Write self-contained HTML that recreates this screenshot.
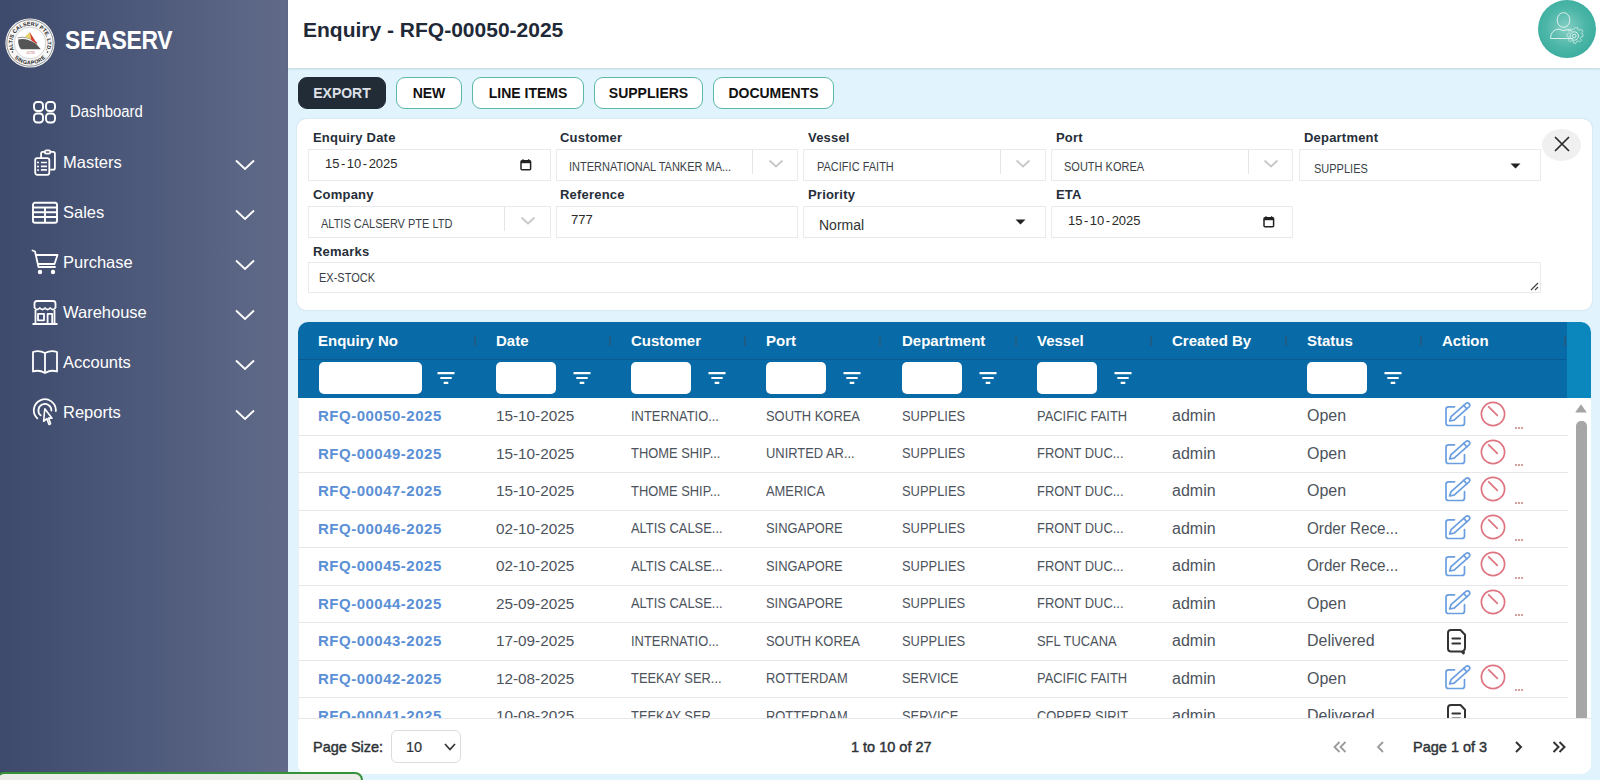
<!DOCTYPE html>
<html><head><meta charset="utf-8">
<style>
*{box-sizing:border-box;margin:0;padding:0}
html,body{width:1600px;height:780px;overflow:hidden;font-family:"Liberation Sans",sans-serif;background:#e1f3fc}
.abs{position:absolute}
#side{position:absolute;left:0;top:0;width:288px;height:780px;background:linear-gradient(90deg,#3d4a6b 0%,#4e5a7b 50%,#616a89 100%)}
#side .logo{position:absolute;left:6px;top:18px;width:49px;height:49px;border-radius:50%;background:#fff}
#side .brand{position:absolute;left:65px;top:26px;color:#fff;font-weight:bold;font-size:25.5px;letter-spacing:-0.3px;transform:scaleX(.9);transform-origin:0 0}
.nl{position:absolute;color:#fff;font-size:16.5px;line-height:18px}
.chev{left:234px}
.nav{position:absolute;left:0;width:288px;height:40px;color:#fff;font-size:16px}
.nav .ic{position:absolute;left:32px;top:8px;width:26px;height:26px}
.nav .lb{position:absolute;left:63px;top:10px}
.nav .chev{position:absolute;left:234px;top:14px;width:22px;height:12px}
#header{position:absolute;left:288px;top:0;width:1312px;height:68px;background:#fff;box-shadow:0 1px 2px rgba(40,70,90,.18)}
#title{position:absolute;left:303px;top:18px;font-size:21px;font-weight:bold;color:#1f2937}
.avatar{position:absolute;left:1538px;top:0;width:58px;height:58px;border-radius:50%;background:radial-gradient(circle at 48% 48%,#86cfc4 0%,#4db7a9 45%,#2aa394 100%)}
.btn{position:absolute;top:77px;height:32px;border:1px solid #5ab9a8;border-radius:9px;background:#fff;color:#111;font-weight:bold;font-size:14px;text-align:center;line-height:30px}
.btn.dark{background:#222c37;color:#dfe1e8;border-color:#222c37}
#form{position:absolute;left:297px;top:119px;width:1295px;height:191px;background:#fff;border-radius:9px;box-shadow:0 0 1.5px rgba(40,70,90,.22)}
.lbl{position:absolute;font-size:13px;font-weight:bold;color:#262e39;letter-spacing:.2px}
.inp{position:absolute;height:32px;border:1px solid #e8eaed;background:#fff;font-size:12px;color:#333}
.inp span{position:absolute;left:12px;top:10px}
#table{position:absolute;left:298px;top:322px;width:1293px;height:452px;background:#fff;border-radius:10px;overflow:hidden}
#thead{position:absolute;left:0;top:0;width:1269px;height:76px;background:#086aa6}
#thead2{position:absolute;left:1269px;top:0;width:24px;height:76px;background:#0b87bd}
.th{position:absolute;top:10px;color:#fff;font-weight:bold;font-size:15px}
.sep{position:absolute;top:14px;width:2px;height:10px;background:#1f5c88}
.fin{position:absolute;top:40px;height:32px;background:#fff;border-radius:5px}
.row{position:absolute;left:0;width:1270px;height:37.5px;border-bottom:1px solid #e5e7eb;font-size:15px;color:#4b5563}
.row div{position:absolute;top:10px;white-space:nowrap}
.row .id{color:#5b8fd6;font-weight:bold;font-size:15px;letter-spacing:0.5px;top:9px}
.row .dg{font-size:15.3px;color:#4d535c;top:9px}
.row .up{font-size:14.5px;transform:scaleX(.89);transform-origin:0 0;color:#4d535c;top:9.5px}
.row .lw{font-size:16px;color:#4d535c;top:9px}
#foot{position:absolute;left:0;top:396px;width:1293px;height:56px;background:#fff;border-top:1px solid #e5e7eb}
#toast{position:absolute;left:-4px;top:772px;width:367px;height:30px;border:2.5px solid #35903a;border-radius:8px;background:#ecedea}
.inp .ut{font-size:12.5px;color:#3a3f47;transform:scaleX(.88);transform-origin:0 0;white-space:nowrap}
.inp .dt{font-size:13px;color:#2a2a2a;letter-spacing:0}
.dt i{font-style:normal;margin:0 1.5px}
.inp .nt{font-size:14px;color:#333}
.vs{position:absolute;top:0px;width:1px;height:24px;background:#e5e5e5}
.hline{position:absolute;left:0;top:37px;width:1268px;height:1px;background:#0a5b93}
#tbody{position:absolute;left:0;top:0;width:1270px;height:396px;overflow:hidden}
#tbody::before{content:"";position:absolute;left:0;top:76px;width:1px;height:320px;background:#eceef0}
.dots{position:absolute;width:8px;height:2px;background:repeating-linear-gradient(90deg,#d9a0a0 0 1.5px,transparent 1.5px 3px)}
.ft{position:absolute;font-size:14.5px;color:#2f3338;font-weight:normal;-webkit-text-stroke:0.45px #2f3338}
</style></head><body>
<div id="side">
  <svg class="abs" style="left:5px;top:18px" width="50" height="50" viewBox="0 0 50 50">
    <circle cx="25" cy="25" r="24.6" fill="#f7f7f7"/>
    <circle cx="25" cy="25" r="23.2" fill="none" stroke="#666" stroke-width="0.7"/>
    <circle cx="25" cy="25" r="15.8" fill="#fff" stroke="#aaa" stroke-width="0.5"/>
    <path d="M12.8 19.8 Q22 17.6 32.2 24.8" fill="none" stroke="#888" stroke-width="0.9"/>
    <path d="M19.8 19 L24.7 14 L27 21.5 Z" fill="#e6d36a"/>
    <path d="M24.7 14 L32.5 26.5 L26.5 22.5 Z" fill="#d63b30"/>
    <path d="M13.2 21.5 Q22 19.8 31 25.8 L35.8 31.3 L16 31.3 Q13 28 13.2 21.5 Z" fill="#555"/>
    <text x="25.4" y="35.6" font-size="3.2" text-anchor="middle" fill="#b55" font-family="Liberation Serif">ALTIS</text>
    <path id="arcT" d="M9.8 33.75 A17.5 17.5 0 1 1 40.2 33.75" fill="none"/>
    <text font-size="5.4" font-weight="bold" fill="#2a2a2a" font-family="Liberation Sans" letter-spacing="0"><textPath href="#arcT" startOffset="50%" text-anchor="middle">ALTIS CALSERV PTE. LTD.</textPath></text>
    <path id="arcB" d="M6.4 35.75 A21.5 21.5 0 0 0 43.6 35.75" fill="none"/>
    <text font-size="5.4" font-weight="bold" fill="#2a2a2a" font-family="Liberation Sans" letter-spacing="0.3"><textPath href="#arcB" startOffset="50%" text-anchor="middle">SINGAPORE</textPath></text>
    <circle cx="7.5" cy="34" r="0.8" fill="#333"/><circle cx="42.5" cy="34" r="0.8" fill="#333"/>
  </svg>
  <div class="brand">SEASERV</div>

  <svg class="abs" style="left:32px;top:100px" width="26" height="26" viewBox="0 0 26 26" fill="none" stroke="#fff" stroke-width="1.9">
    <rect x="2" y="2" width="9" height="9" rx="3.2"/><rect x="14" y="2" width="9" height="9" rx="3.2"/>
    <rect x="2" y="13.5" width="9" height="9" rx="3.2"/><rect x="14" y="13.5" width="9" height="9" rx="3.2"/>
  </svg>
  <div class="nl" style="left:70px;top:102.5px;font-size:16px;transform:scaleX(.93);transform-origin:0 0">Dashboard</div>

  <svg class="abs" style="left:32px;top:148px" width="26" height="30" viewBox="0 0 26 30" fill="none" stroke="#fff" stroke-width="1.8" stroke-linejoin="round">
    <path d="M9.1 10 V5.5 Q9.1 3.9 10.8 3.9 H12.8 M18.4 3.9 H21.2 Q22.9 3.9 22.9 5.6 V20 Q22.9 21.7 21.2 21.7 H18.2"/>
    <rect x="12.8" y="2.4" width="5.6" height="3.2" rx="1.6"/>
    <rect x="3.2" y="10.1" width="14.1" height="16.7" rx="2"/>
    <path d="M8.9 14.5h6M8.9 18.4h6M8.9 21.9h6" stroke-width="1.7"/><g fill="#fff" stroke="none"><circle cx="6" cy="14.5" r="1"/><circle cx="6" cy="18.4" r="1"/><circle cx="6" cy="21.9" r="1"/></g>
  </svg>
  <div class="nl" style="left:63px;top:153px">Masters</div>

  <svg class="abs" style="left:31px;top:201px" width="28" height="24" viewBox="0 0 28 24" fill="none" stroke="#fff" stroke-width="1.9">
    <rect x="2" y="1.8" width="24" height="20" rx="2"/>
    <path d="M2 6.5H26M2 11.2H26M2 16H26M14 6.5V21.8"/>
  </svg>
  <div class="nl" style="left:63px;top:203px">Sales</div>

  <svg class="abs" style="left:31px;top:249px" width="28" height="27" viewBox="0 0 28 27" fill="none" stroke="#fff" stroke-width="1.8" stroke-linejoin="round" stroke-linecap="round">
    <path d="M1.5 1.5 L4 2.5 L7.5 18 H24"/>
    <path d="M5.5 6 H26.5 L23.5 15 H7.5"/>
    <circle cx="9" cy="23" r="1.3" fill="#fff"/><circle cx="22" cy="23" r="1.3" fill="#fff"/>
  </svg>
  <div class="nl" style="left:63px;top:253px">Purchase</div>

  <svg class="abs" style="left:31px;top:299px" width="28" height="28" viewBox="0 0 28 28" fill="none" stroke="#fff" stroke-width="1.8" stroke-linejoin="round">
    <path d="M3.5 9 V4.5 Q3.5 2 6 2 H22 Q24.5 2 24.5 4.5 V9"/>
    <path d="M3.5 9 Q6 12 8.8 9 Q11.5 12 14 9 Q16.5 12 19.2 9 Q22 12 24.5 9"/>
    <path d="M4.5 11 V24.5 M23.5 11 V24.5 M1.5 25 H26.5"/>
    <rect x="7" y="14.8" width="6" height="6.5"/>
    <path d="M16.6 24.5 V14.8 H21.2 V24.5"/>
  </svg>
  <div class="nl" style="left:63px;top:303px">Warehouse</div>

  <svg class="abs" style="left:31px;top:349px" width="28" height="27" viewBox="0 0 28 27" fill="none" stroke="#fff" stroke-width="1.8" stroke-linejoin="round">
    <path d="M2 3 Q8 1 14 4 Q20 1 26 3 V22.5 Q20 20.5 14 24 Q8 20.5 2 22.5 Z"/>
    <path d="M14 4 V24"/>
  </svg>
  <div class="nl" style="left:63px;top:353px">Accounts</div>

  <svg class="abs" style="left:32px;top:397px" width="27" height="30" viewBox="0 0 27 30" fill="none" stroke="#fff" stroke-width="1.8" stroke-linecap="round" stroke-linejoin="round">
    <path d="M5.3 21.3 A11 11 0 1 1 23.8 14"/>
    <path d="M8.7 18.4 A6.5 6.5 0 1 1 19.4 13.5"/>
    <path d="M12.8 11.8 L11.6 24.3 L14.8 21.6 L17 27.5 L18.6 26.8 L16.6 21 L20 21.2 Z" stroke-width="1.6"/>
  </svg>
  <div class="nl" style="left:63px;top:403px">Reports</div>

  <svg class="abs chev" style="top:159px" width="22" height="12" viewBox="0 0 22 12"><path d="M2 1.5 L11 10 L20 1.5" fill="none" stroke="#fff" stroke-width="1.9"/></svg>
  <svg class="abs chev" style="top:209px" width="22" height="12" viewBox="0 0 22 12"><path d="M2 1.5 L11 10 L20 1.5" fill="none" stroke="#fff" stroke-width="1.9"/></svg>
  <svg class="abs chev" style="top:259px" width="22" height="12" viewBox="0 0 22 12"><path d="M2 1.5 L11 10 L20 1.5" fill="none" stroke="#fff" stroke-width="1.9"/></svg>
  <svg class="abs chev" style="top:309px" width="22" height="12" viewBox="0 0 22 12"><path d="M2 1.5 L11 10 L20 1.5" fill="none" stroke="#fff" stroke-width="1.9"/></svg>
  <svg class="abs chev" style="top:359px" width="22" height="12" viewBox="0 0 22 12"><path d="M2 1.5 L11 10 L20 1.5" fill="none" stroke="#fff" stroke-width="1.9"/></svg>
  <svg class="abs chev" style="top:409px" width="22" height="12" viewBox="0 0 22 12"><path d="M2 1.5 L11 10 L20 1.5" fill="none" stroke="#fff" stroke-width="1.9"/></svg>
</div>
<div id="header"></div>
<div id="title">Enquiry - RFQ-00050-2025</div>
<div class="avatar"></div>
<svg class="abs" style="left:1537px;top:0px" width="60" height="60" viewBox="0 0 60 60" fill="none" stroke="#e6f5f2" stroke-width="0.9">
  <ellipse cx="26.5" cy="20" rx="6.3" ry="7.4"/>
  <path d="M13.5 38.5 Q13.5 30 22 29 Q26 32 31 29.5 Q33 30 35 31.5"/>
  <path d="M13.5 38.5 H36"/>
  <g transform="translate(37.3,36)">
    <path d="M-1.6 -9 H1.6 L2.2 -6.4 L4.6 -5.4 L6.8 -6.9 L9 -4.7 L7.5 -2.5 L8.5 -0.1 L9 0 V3.2 L6.4 3.8 L5.4 6.2 L6.9 8.4 L4.7 10.6 L2.5 9.1 L0.1 10.1 L-0.5 12.6 H-3.7 L-4.3 10 L-6.7 9 L-8.9 10.5 L-11.1 8.3 L-9.6 6.1 L-10.6 3.7 L-13.2 3.1 V-0.1 L-10.6 -0.7 L-9.6 -3.1 L-11.1 -5.3 L-8.9 -7.5 L-6.7 -6 L-4.3 -7 Z" transform="translate(2.1,-1.8) scale(0.72)"/>
    <circle cx="0" cy="0" r="4.2"/>
    <circle cx="0" cy="0" r="1.8"/>
  </g>
</svg>
<div class="btn dark" style="left:298px;width:88px">EXPORT</div>
<div class="btn" style="left:396px;width:66px">NEW</div>
<div class="btn" style="left:472px;width:112px">LINE ITEMS</div>
<div class="btn" style="left:594px;width:109px">SUPPLIERS</div>
<div class="btn" style="left:713px;width:121px">DOCUMENTS</div>
<div id="form">
  <div class="lbl" style="left:16px;top:11px">Enquiry Date</div>
  <div class="lbl" style="left:263px;top:11px">Customer</div>
  <div class="lbl" style="left:511px;top:11px">Vessel</div>
  <div class="lbl" style="left:759px;top:11px">Port</div>
  <div class="lbl" style="left:1007px;top:11px">Department</div>
  <div class="lbl" style="left:16px;top:68px">Company</div>
  <div class="lbl" style="left:263px;top:68px">Reference</div>
  <div class="lbl" style="left:511px;top:68px">Priority</div>
  <div class="lbl" style="left:759px;top:68px">ETA</div>
  <div class="lbl" style="left:16px;top:125px">Remarks</div>

  <div class="inp" style="left:11px;top:30px;width:243px"><span class="dt" style="left:16px;top:6px">15<i>-</i>10<i>-</i>2025</span>
    <svg class="abs" style="left:211px;top:8px" width="12" height="13" viewBox="0 0 12 13"><rect x="1" y="2.8" width="9.6" height="9" rx="1" fill="none" stroke="#222" stroke-width="1.5"/><rect x="1" y="2.8" width="9.6" height="2.4" fill="#222"/><path d="M3 1.2 V3 M8.6 1.2 V3" stroke="#222" stroke-width="1.3"/></svg>
  </div>
  <div class="inp" style="left:259px;top:30px;width:242px"><span class="ut" style="left:12px;top:10px">INTERNATIONAL TANKER MA...</span>
    <div class="vs" style="left:195px"></div><svg class="abs dch" style="left:211px;top:9px" width="16" height="10" viewBox="0 0 16 10"><path d="M1.5 1.5 L8 7.5 L14.5 1.5" fill="none" stroke="#c8c8c8" stroke-width="1.8"/></svg>
  </div>
  <div class="inp" style="left:506px;top:30px;width:243px"><span class="ut" style="left:13px;top:10px">PACIFIC FAITH</span>
    <div class="vs" style="left:196px"></div><svg class="abs dch" style="left:211px;top:9px" width="16" height="10" viewBox="0 0 16 10"><path d="M1.5 1.5 L8 7.5 L14.5 1.5" fill="none" stroke="#c8c8c8" stroke-width="1.8"/></svg>
  </div>
  <div class="inp" style="left:754px;top:30px;width:242px"><span class="ut" style="left:12px;top:10px">SOUTH KOREA</span>
    <div class="vs" style="left:196px"></div><svg class="abs dch" style="left:211px;top:9px" width="16" height="10" viewBox="0 0 16 10"><path d="M1.5 1.5 L8 7.5 L14.5 1.5" fill="none" stroke="#c8c8c8" stroke-width="1.8"/></svg>
  </div>
  <div class="inp" style="left:1002px;top:30px;width:242px"><span class="ut" style="left:14px;top:12px">SUPPLIES</span>
    <svg class="abs" style="left:210px;top:13px" width="11" height="6" viewBox="0 0 11 6"><path d="M0.5 0.5 H10.5 L5.5 5.5 Z" fill="#222"/></svg>
  </div>

  <div class="inp" style="left:11px;top:87px;width:243px"><span class="ut" style="left:12px;top:10px">ALTIS CALSERV PTE LTD</span>
    <div class="vs" style="left:195px"></div><svg class="abs dch" style="left:211px;top:9px" width="16" height="10" viewBox="0 0 16 10"><path d="M1.5 1.5 L8 7.5 L14.5 1.5" fill="none" stroke="#c8c8c8" stroke-width="1.8"/></svg>
  </div>
  <div class="inp" style="left:259px;top:87px;width:242px"><span class="dt" style="left:14px;top:5px">777</span></div>
  <div class="inp" style="left:506px;top:87px;width:243px"><span class="nt" style="left:15px;top:10px">Normal</span>
    <svg class="abs" style="left:211px;top:12px" width="11" height="6" viewBox="0 0 11 6"><path d="M0.5 0.5 H10.5 L5.5 5.5 Z" fill="#222"/></svg>
  </div>
  <div class="inp" style="left:754px;top:87px;width:242px"><span class="dt" style="left:16px;top:6px">15<i>-</i>10<i>-</i>2025</span>
    <svg class="abs" style="left:211px;top:8px" width="12" height="13" viewBox="0 0 12 13"><rect x="1" y="2.8" width="9.6" height="9" rx="1" fill="none" stroke="#222" stroke-width="1.5"/><rect x="1" y="2.8" width="9.6" height="2.4" fill="#222"/><path d="M3 1.2 V3 M8.6 1.2 V3" stroke="#222" stroke-width="1.3"/></svg>
  </div>
  <div class="inp" style="left:11px;top:143px;width:1233px;height:31px"><span class="ut" style="left:10px;top:8px">EX-STOCK</span>
    <svg class="abs" style="left:1220px;top:18px" width="10" height="10" viewBox="0 0 10 10"><path d="M9 2 L2 9 M9 6 L6 9" stroke="#444" stroke-width="1.2"/></svg>
  </div>
  <div class="abs" style="left:1245px;top:10px;width:39px;height:32px;border-radius:50%;background:#f0f0f0"></div>
  <svg class="abs" style="left:1257px;top:17px" width="16" height="16" viewBox="0 0 16 16"><path d="M1 1 L15 15 M15 1 L1 15" stroke="#2a2a2a" stroke-width="1.7"/></svg>
</div>

<div id="table">
<div id="thead"></div><div id="thead2"></div><div class="hline"></div>
<div class="th" style="left:20px">Enquiry No</div>
<div class="th" style="left:198px">Date</div>
<div class="th" style="left:333px">Customer</div>
<div class="th" style="left:468px">Port</div>
<div class="th" style="left:604px">Department</div>
<div class="th" style="left:739px">Vessel</div>
<div class="th" style="left:874px">Created By</div>
<div class="th" style="left:1009px">Status</div>
<div class="th" style="left:1144px">Action</div>
<div class="sep" style="left:176px"></div>
<div class="sep" style="left:311px"></div>
<div class="sep" style="left:446px"></div>
<div class="sep" style="left:581px"></div>
<div class="sep" style="left:717px"></div>
<div class="sep" style="left:852px"></div>
<div class="sep" style="left:987px"></div>
<div class="sep" style="left:1122px"></div>
<div class="sep" style="left:1266px"></div>
<div class="fin" style="left:21px;width:103px"></div>
<svg class="abs" style="left:139px;top:50px" width="18" height="12" viewBox="0 0 18 12"><path d="M0.5 1.2H17.5M3.3 6H14.7M6.7 10.8H11.3" stroke="#fff" stroke-width="2.2"/></svg>
<div class="fin" style="left:198px;width:60px"></div>
<svg class="abs" style="left:275px;top:50px" width="18" height="12" viewBox="0 0 18 12"><path d="M0.5 1.2H17.5M3.3 6H14.7M6.7 10.8H11.3" stroke="#fff" stroke-width="2.2"/></svg>
<div class="fin" style="left:333px;width:60px"></div>
<svg class="abs" style="left:410px;top:50px" width="18" height="12" viewBox="0 0 18 12"><path d="M0.5 1.2H17.5M3.3 6H14.7M6.7 10.8H11.3" stroke="#fff" stroke-width="2.2"/></svg>
<div class="fin" style="left:468px;width:60px"></div>
<svg class="abs" style="left:545px;top:50px" width="18" height="12" viewBox="0 0 18 12"><path d="M0.5 1.2H17.5M3.3 6H14.7M6.7 10.8H11.3" stroke="#fff" stroke-width="2.2"/></svg>
<div class="fin" style="left:604px;width:60px"></div>
<svg class="abs" style="left:681px;top:50px" width="18" height="12" viewBox="0 0 18 12"><path d="M0.5 1.2H17.5M3.3 6H14.7M6.7 10.8H11.3" stroke="#fff" stroke-width="2.2"/></svg>
<div class="fin" style="left:739px;width:60px"></div>
<svg class="abs" style="left:816px;top:50px" width="18" height="12" viewBox="0 0 18 12"><path d="M0.5 1.2H17.5M3.3 6H14.7M6.7 10.8H11.3" stroke="#fff" stroke-width="2.2"/></svg>
<div class="fin" style="left:1009px;width:60px"></div>
<svg class="abs" style="left:1086px;top:50px" width="18" height="12" viewBox="0 0 18 12"><path d="M0.5 1.2H17.5M3.3 6H14.7M6.7 10.8H11.3" stroke="#fff" stroke-width="2.2"/></svg>
<div id="tbody">
<div class="row" style="top:76.0px">
<div class="id" style="left:20px">RFQ-00050-2025</div>
<div class="dg" style="left:198px">15-10-2025</div>
<div class="up" style="left:333px">INTERNATIO...</div>
<div class="up" style="left:468px">SOUTH KOREA</div>
<div class="up" style="left:604px">SUPPLIES</div>
<div class="up" style="left:739px">PACIFIC FAITH</div>
<div class="lw" style="left:874px">admin</div>
<div class="lw" style="left:1009px">Open</div>
<svg class="abs" style="left:1145.5px;top:3px" width="27" height="27" viewBox="0 0 27 27" fill="none" stroke="#6a9ee0" stroke-width="1.7" stroke-linecap="round" stroke-linejoin="round"><path d="M10.5 5.8 H4.5 Q2 5.8 2 8.3 V22 Q2 24.5 4.5 24.5 H18 Q20.5 24.5 20.5 22 V15.5"/><path d="M5.6 20 L7.08 15.63 L21.98 2.38 A2.3 2.3 0 0 1 25.02 5.82 L10.12 19.07 Z"/><path d="M19.74 4.37 L22.78 7.81"/></svg>
<svg class="abs" style="left:1181.5px;top:3px" width="26" height="26" viewBox="0 0 26 26" fill="none" stroke="#dd7480" stroke-width="1.7"><circle cx="13" cy="13" r="11.6"/><path d="M8.2 5.4 L17.8 14.8"/></svg>
<div class="dots" style="left:1217px;top:28.5px"></div>
</div>
<div class="row" style="top:113.5px">
<div class="id" style="left:20px">RFQ-00049-2025</div>
<div class="dg" style="left:198px">15-10-2025</div>
<div class="up" style="left:333px">THOME SHIP...</div>
<div class="up" style="left:468px">UNIRTED AR...</div>
<div class="up" style="left:604px">SUPPLIES</div>
<div class="up" style="left:739px">FRONT DUC...</div>
<div class="lw" style="left:874px">admin</div>
<div class="lw" style="left:1009px">Open</div>
<svg class="abs" style="left:1145.5px;top:3px" width="27" height="27" viewBox="0 0 27 27" fill="none" stroke="#6a9ee0" stroke-width="1.7" stroke-linecap="round" stroke-linejoin="round"><path d="M10.5 5.8 H4.5 Q2 5.8 2 8.3 V22 Q2 24.5 4.5 24.5 H18 Q20.5 24.5 20.5 22 V15.5"/><path d="M5.6 20 L7.08 15.63 L21.98 2.38 A2.3 2.3 0 0 1 25.02 5.82 L10.12 19.07 Z"/><path d="M19.74 4.37 L22.78 7.81"/></svg>
<svg class="abs" style="left:1181.5px;top:3px" width="26" height="26" viewBox="0 0 26 26" fill="none" stroke="#dd7480" stroke-width="1.7"><circle cx="13" cy="13" r="11.6"/><path d="M8.2 5.4 L17.8 14.8"/></svg>
<div class="dots" style="left:1217px;top:28.5px"></div>
</div>
<div class="row" style="top:151.0px">
<div class="id" style="left:20px">RFQ-00047-2025</div>
<div class="dg" style="left:198px">15-10-2025</div>
<div class="up" style="left:333px">THOME SHIP...</div>
<div class="up" style="left:468px">AMERICA</div>
<div class="up" style="left:604px">SUPPLIES</div>
<div class="up" style="left:739px">FRONT DUC...</div>
<div class="lw" style="left:874px">admin</div>
<div class="lw" style="left:1009px">Open</div>
<svg class="abs" style="left:1145.5px;top:3px" width="27" height="27" viewBox="0 0 27 27" fill="none" stroke="#6a9ee0" stroke-width="1.7" stroke-linecap="round" stroke-linejoin="round"><path d="M10.5 5.8 H4.5 Q2 5.8 2 8.3 V22 Q2 24.5 4.5 24.5 H18 Q20.5 24.5 20.5 22 V15.5"/><path d="M5.6 20 L7.08 15.63 L21.98 2.38 A2.3 2.3 0 0 1 25.02 5.82 L10.12 19.07 Z"/><path d="M19.74 4.37 L22.78 7.81"/></svg>
<svg class="abs" style="left:1181.5px;top:3px" width="26" height="26" viewBox="0 0 26 26" fill="none" stroke="#dd7480" stroke-width="1.7"><circle cx="13" cy="13" r="11.6"/><path d="M8.2 5.4 L17.8 14.8"/></svg>
<div class="dots" style="left:1217px;top:28.5px"></div>
</div>
<div class="row" style="top:188.5px">
<div class="id" style="left:20px">RFQ-00046-2025</div>
<div class="dg" style="left:198px">02-10-2025</div>
<div class="up" style="left:333px">ALTIS CALSE...</div>
<div class="up" style="left:468px">SINGAPORE</div>
<div class="up" style="left:604px">SUPPLIES</div>
<div class="up" style="left:739px">FRONT DUC...</div>
<div class="lw" style="left:874px">admin</div>
<div class="lw" style="left:1009px"><span style="display:inline-block;transform:scaleX(.95);transform-origin:0 0">Order Rece...</span></div>
<svg class="abs" style="left:1145.5px;top:3px" width="27" height="27" viewBox="0 0 27 27" fill="none" stroke="#6a9ee0" stroke-width="1.7" stroke-linecap="round" stroke-linejoin="round"><path d="M10.5 5.8 H4.5 Q2 5.8 2 8.3 V22 Q2 24.5 4.5 24.5 H18 Q20.5 24.5 20.5 22 V15.5"/><path d="M5.6 20 L7.08 15.63 L21.98 2.38 A2.3 2.3 0 0 1 25.02 5.82 L10.12 19.07 Z"/><path d="M19.74 4.37 L22.78 7.81"/></svg>
<svg class="abs" style="left:1181.5px;top:3px" width="26" height="26" viewBox="0 0 26 26" fill="none" stroke="#dd7480" stroke-width="1.7"><circle cx="13" cy="13" r="11.6"/><path d="M8.2 5.4 L17.8 14.8"/></svg>
<div class="dots" style="left:1217px;top:28.5px"></div>
</div>
<div class="row" style="top:226.0px">
<div class="id" style="left:20px">RFQ-00045-2025</div>
<div class="dg" style="left:198px">02-10-2025</div>
<div class="up" style="left:333px">ALTIS CALSE...</div>
<div class="up" style="left:468px">SINGAPORE</div>
<div class="up" style="left:604px">SUPPLIES</div>
<div class="up" style="left:739px">FRONT DUC...</div>
<div class="lw" style="left:874px">admin</div>
<div class="lw" style="left:1009px"><span style="display:inline-block;transform:scaleX(.95);transform-origin:0 0">Order Rece...</span></div>
<svg class="abs" style="left:1145.5px;top:3px" width="27" height="27" viewBox="0 0 27 27" fill="none" stroke="#6a9ee0" stroke-width="1.7" stroke-linecap="round" stroke-linejoin="round"><path d="M10.5 5.8 H4.5 Q2 5.8 2 8.3 V22 Q2 24.5 4.5 24.5 H18 Q20.5 24.5 20.5 22 V15.5"/><path d="M5.6 20 L7.08 15.63 L21.98 2.38 A2.3 2.3 0 0 1 25.02 5.82 L10.12 19.07 Z"/><path d="M19.74 4.37 L22.78 7.81"/></svg>
<svg class="abs" style="left:1181.5px;top:3px" width="26" height="26" viewBox="0 0 26 26" fill="none" stroke="#dd7480" stroke-width="1.7"><circle cx="13" cy="13" r="11.6"/><path d="M8.2 5.4 L17.8 14.8"/></svg>
<div class="dots" style="left:1217px;top:28.5px"></div>
</div>
<div class="row" style="top:263.5px">
<div class="id" style="left:20px">RFQ-00044-2025</div>
<div class="dg" style="left:198px">25-09-2025</div>
<div class="up" style="left:333px">ALTIS CALSE...</div>
<div class="up" style="left:468px">SINGAPORE</div>
<div class="up" style="left:604px">SUPPLIES</div>
<div class="up" style="left:739px">FRONT DUC...</div>
<div class="lw" style="left:874px">admin</div>
<div class="lw" style="left:1009px">Open</div>
<svg class="abs" style="left:1145.5px;top:3px" width="27" height="27" viewBox="0 0 27 27" fill="none" stroke="#6a9ee0" stroke-width="1.7" stroke-linecap="round" stroke-linejoin="round"><path d="M10.5 5.8 H4.5 Q2 5.8 2 8.3 V22 Q2 24.5 4.5 24.5 H18 Q20.5 24.5 20.5 22 V15.5"/><path d="M5.6 20 L7.08 15.63 L21.98 2.38 A2.3 2.3 0 0 1 25.02 5.82 L10.12 19.07 Z"/><path d="M19.74 4.37 L22.78 7.81"/></svg>
<svg class="abs" style="left:1181.5px;top:3px" width="26" height="26" viewBox="0 0 26 26" fill="none" stroke="#dd7480" stroke-width="1.7"><circle cx="13" cy="13" r="11.6"/><path d="M8.2 5.4 L17.8 14.8"/></svg>
<div class="dots" style="left:1217px;top:28.5px"></div>
</div>
<div class="row" style="top:301.0px">
<div class="id" style="left:20px">RFQ-00043-2025</div>
<div class="dg" style="left:198px">17-09-2025</div>
<div class="up" style="left:333px">INTERNATIO...</div>
<div class="up" style="left:468px">SOUTH KOREA</div>
<div class="up" style="left:604px">SUPPLIES</div>
<div class="up" style="left:739px">SFL TUCANA</div>
<div class="lw" style="left:874px">admin</div>
<div class="lw" style="left:1009px">Delivered</div>
<svg class="abs" style="left:1148px;top:5px" width="22" height="27" viewBox="0 0 22 27" fill="none" stroke="#333" stroke-width="2" stroke-linejoin="round" stroke-linecap="round"><path d="M5 2 H14.5 L19 6.8 V19.5 Q19 22.5 17 23 Q18.5 24.5 17.5 25.5 L15.5 23.5 H5 Q2 23.5 2 20.5 V5 Q2 2 5 2 Z"/><path d="M6.5 10.5 H14 M6.5 15.5 H14" stroke-width="2.2"/></svg>
</div>
<div class="row" style="top:338.5px">
<div class="id" style="left:20px">RFQ-00042-2025</div>
<div class="dg" style="left:198px">12-08-2025</div>
<div class="up" style="left:333px">TEEKAY SER...</div>
<div class="up" style="left:468px">ROTTERDAM</div>
<div class="up" style="left:604px">SERVICE</div>
<div class="up" style="left:739px">PACIFIC FAITH</div>
<div class="lw" style="left:874px">admin</div>
<div class="lw" style="left:1009px">Open</div>
<svg class="abs" style="left:1145.5px;top:3px" width="27" height="27" viewBox="0 0 27 27" fill="none" stroke="#6a9ee0" stroke-width="1.7" stroke-linecap="round" stroke-linejoin="round"><path d="M10.5 5.8 H4.5 Q2 5.8 2 8.3 V22 Q2 24.5 4.5 24.5 H18 Q20.5 24.5 20.5 22 V15.5"/><path d="M5.6 20 L7.08 15.63 L21.98 2.38 A2.3 2.3 0 0 1 25.02 5.82 L10.12 19.07 Z"/><path d="M19.74 4.37 L22.78 7.81"/></svg>
<svg class="abs" style="left:1181.5px;top:3px" width="26" height="26" viewBox="0 0 26 26" fill="none" stroke="#dd7480" stroke-width="1.7"><circle cx="13" cy="13" r="11.6"/><path d="M8.2 5.4 L17.8 14.8"/></svg>
<div class="dots" style="left:1217px;top:28.5px"></div>
</div>
<div class="row" style="top:376.0px">
<div class="id" style="left:20px">RFQ-00041-2025</div>
<div class="dg" style="left:198px">10-08-2025</div>
<div class="up" style="left:333px">TEEKAY SER...</div>
<div class="up" style="left:468px">ROTTERDAM</div>
<div class="up" style="left:604px">SERVICE</div>
<div class="up" style="left:739px">COPPER SIRIT</div>
<div class="lw" style="left:874px">admin</div>
<div class="lw" style="left:1009px">Delivered</div>
<svg class="abs" style="left:1148px;top:5px" width="22" height="27" viewBox="0 0 22 27" fill="none" stroke="#333" stroke-width="2" stroke-linejoin="round" stroke-linecap="round"><path d="M5 2 H14.5 L19 6.8 V19.5 Q19 22.5 17 23 Q18.5 24.5 17.5 25.5 L15.5 23.5 H5 Q2 23.5 2 20.5 V5 Q2 2 5 2 Z"/><path d="M6.5 10.5 H14 M6.5 15.5 H14" stroke-width="2.2"/></svg>
</div>
</div>
<div class="abs" style="left:1270px;top:76px;width:23px;height:320px;background:#fff"></div>
<svg class="abs" style="left:1277px;top:81.5px" width="12" height="9" viewBox="0 0 12 9"><path d="M6 0.3 L11.8 8.6 H0.2 Z" fill="#a3a3a3"/></svg>
<div class="abs" style="left:1278px;top:99px;width:11px;height:300px;background:#a6a6a6;border-radius:5px 5px 0 0"></div>
<div id="foot">
<div class="ft" style="left:15px;top:20px">Page Size:</div>
<div class="abs" style="left:93px;top:11px;width:70px;height:33px;border:1px solid #dcdcdc;border-radius:6px"></div>
<div class="ft" style="left:108px;top:20px;-webkit-text-stroke:0.2px #2f3338">10</div>
<svg class="abs" style="left:146px;top:24px" width="12" height="8" viewBox="0 0 12 8"><path d="M1 1 L6 6.5 L11 1" fill="none" stroke="#333" stroke-width="1.7"/></svg>
<div class="ft" style="left:553px;top:20px">1 to 10 of 27</div>
<div class="ft" style="left:1115px;top:20px">Page 1 of 3</div>
<svg class="abs" style="left:1035px;top:22px" width="14" height="12" viewBox="0 0 14 12"><path d="M6.5 1 L1.5 6 L6.5 11 M12.5 1 L7.5 6 L12.5 11" fill="none" stroke="#9a9a9a" stroke-width="1.8"/></svg>
<svg class="abs" style="left:1078px;top:22px" width="9" height="12" viewBox="0 0 9 12"><path d="M7 1 L2 6 L7 11" fill="none" stroke="#9a9a9a" stroke-width="1.8"/></svg>
<svg class="abs" style="left:1216px;top:22px" width="9" height="12" viewBox="0 0 9 12"><path d="M2 1 L7 6 L2 11" fill="none" stroke="#333" stroke-width="2"/></svg>
<svg class="abs" style="left:1254px;top:22px" width="14" height="12" viewBox="0 0 14 12"><path d="M1.5 1 L6.5 6 L1.5 11 M7.5 1 L12.5 6 L7.5 11" fill="none" stroke="#333" stroke-width="2"/></svg>
</div>
</div>
<div id="toast"></div>
</body></html>
